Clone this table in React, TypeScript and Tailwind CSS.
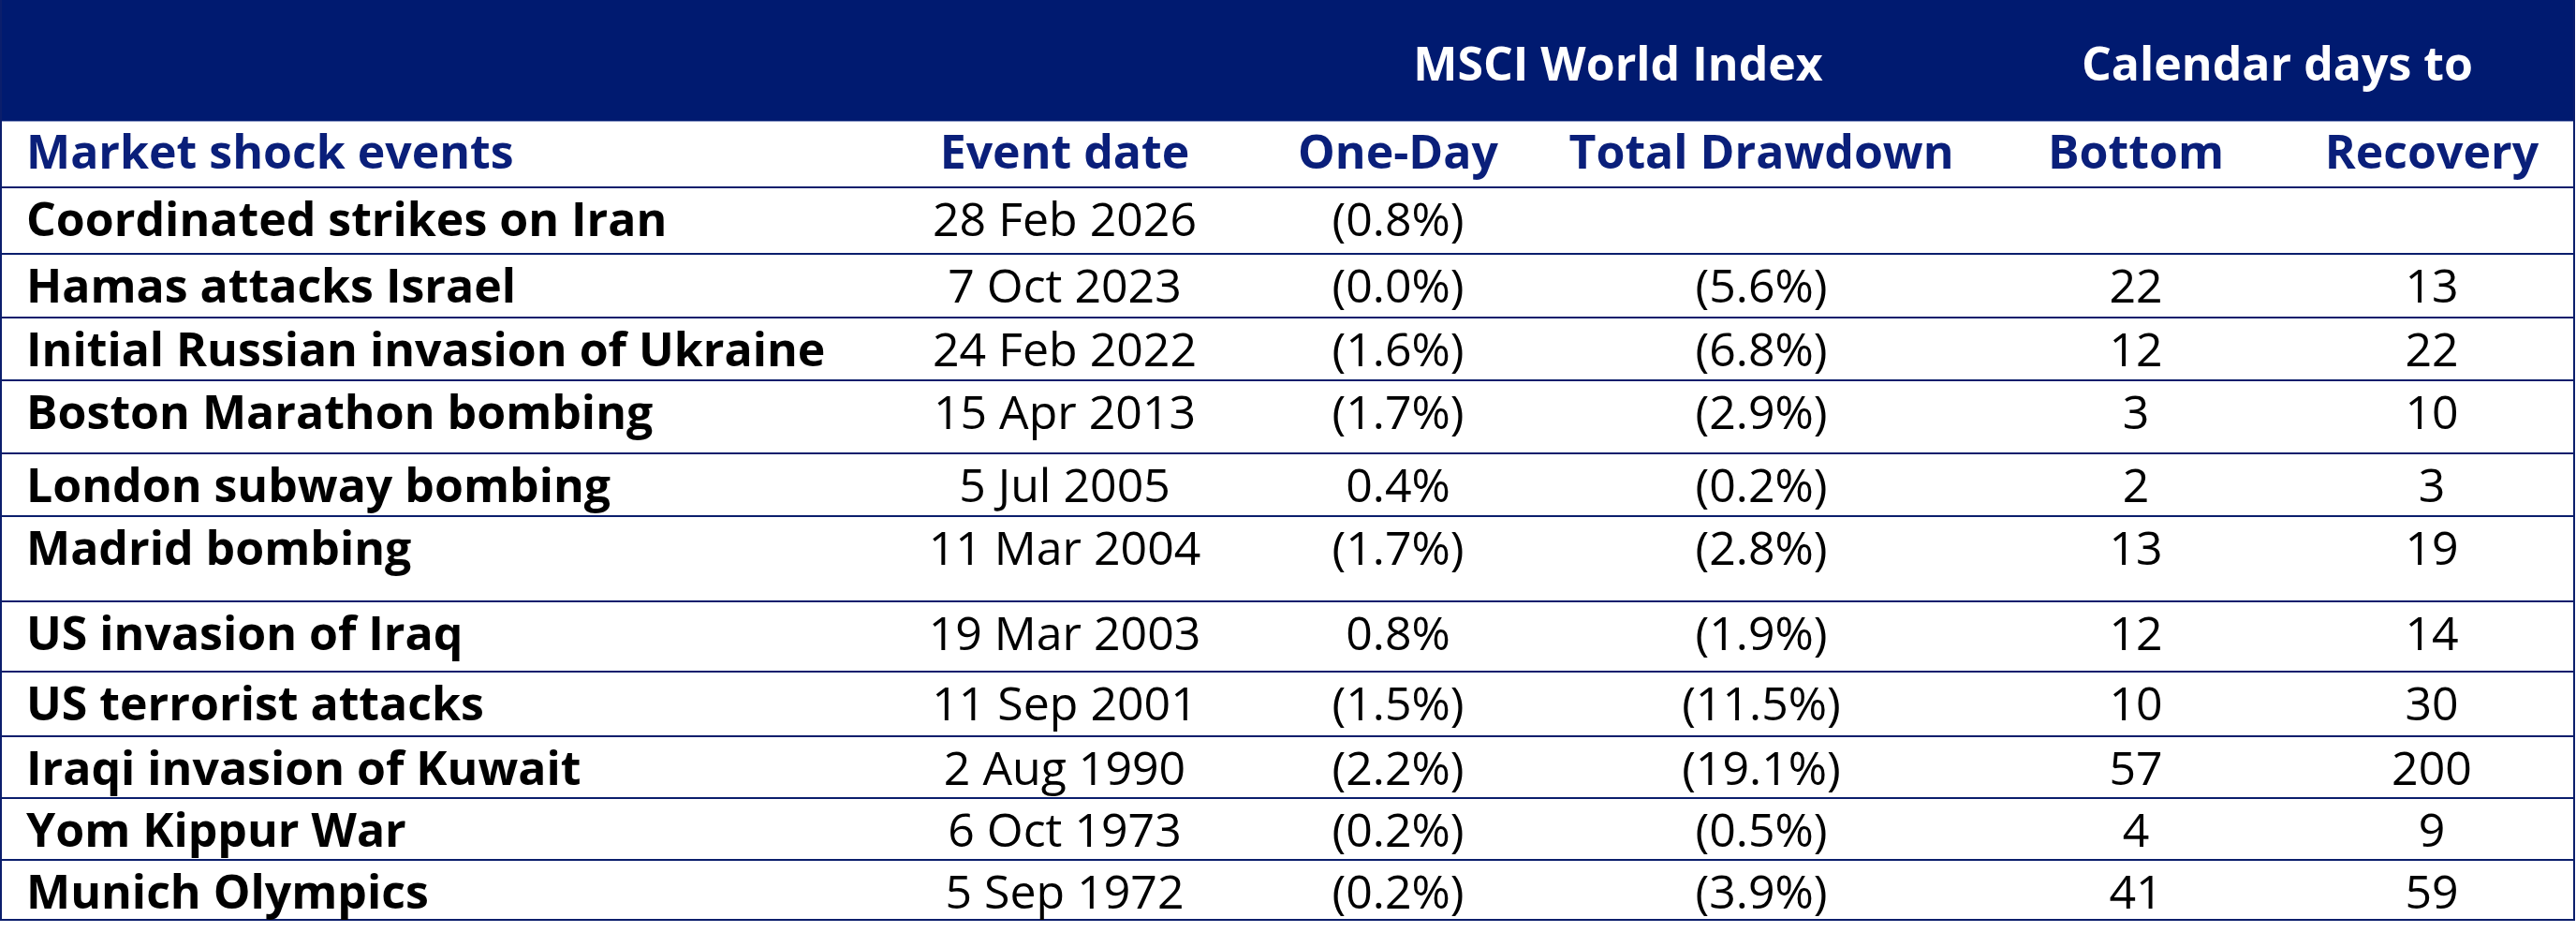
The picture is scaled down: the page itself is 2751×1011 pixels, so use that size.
const cols = "grid grid-cols-[932px_406px_306px_470px_330px_302px]";

type Row = {
  name: string;
  date: string;
  oneDay: string;
  drawdown: string;
  bottom: string;
  recovery: string;
  h: string;
};

const rows: Row[] = [
  { name: "Coordinated strikes on Iran", date: "28 Feb 2026", oneDay: "(0.8%)", drawdown: "", bottom: "", recovery: "", h: "h-[71px]" },
  { name: "Hamas attacks Israel", date: "7 Oct 2023", oneDay: "(0.0%)", drawdown: "(5.6%)", bottom: "22", recovery: "13", h: "h-[68px]" },
  { name: "Initial Russian invasion of Ukraine", date: "24 Feb 2022", oneDay: "(1.6%)", drawdown: "(6.8%)", bottom: "12", recovery: "22", h: "h-[67px]" },
  { name: "Boston Marathon bombing", date: "15 Apr 2013", oneDay: "(1.7%)", drawdown: "(2.9%)", bottom: "3", recovery: "10", h: "h-[78px]" },
  { name: "London subway bombing", date: "5 Jul 2005", oneDay: "0.4%", drawdown: "(0.2%)", bottom: "2", recovery: "3", h: "h-[67px]" },
  { name: "Madrid bombing", date: "11 Mar 2004", oneDay: "(1.7%)", drawdown: "(2.8%)", bottom: "13", recovery: "19", h: "h-[91px]" },
  { name: "US invasion of Iraq", date: "19 Mar 2003", oneDay: "0.8%", drawdown: "(1.9%)", bottom: "12", recovery: "14", h: "h-[75px]" },
  { name: "US terrorist attacks", date: "11 Sep 2001", oneDay: "(1.5%)", drawdown: "(11.5%)", bottom: "10", recovery: "30", h: "h-[69px]" },
  { name: "Iraqi invasion of Kuwait", date: "2 Aug 1990", oneDay: "(2.2%)", drawdown: "(19.1%)", bottom: "57", recovery: "200", h: "h-[66px]" },
  { name: "Yom Kippur War", date: "6 Oct 1973", oneDay: "(0.2%)", drawdown: "(0.5%)", bottom: "4", recovery: "9", h: "h-[66px]" },
  { name: "Munich Olympics", date: "5 Sep 1972", oneDay: "(0.2%)", drawdown: "(3.9%)", bottom: "41", recovery: "59", h: "h-[64px]" },
];

export default function App() {
  return (
    <div className="min-h-screen bg-white font-['Open_Sans',sans-serif] text-[50px] leading-[58px]">
      <div className="w-[2750px] border-x-2 border-[#0b1e6c]">
        {/* dark header */}
        <div className={`${cols} h-[130px] bg-[#001a70] text-white font-bold pt-[38px] border-b border-[#8a96c4]`}>
          <div />
          <div />
          <div className="col-span-2 text-center">MSCI World Index</div>
          <div className="col-span-2 text-center">Calendar days to</div>
        </div>

        {/* sub header */}
        <div className={`${cols} h-[71px] border-b-2 border-[#0b1e6c] text-[#0a1f7a] font-bold pt-[2px]`}>
          <div className="pl-[26px]">Market shock events</div>
          <div className="text-center">Event date</div>
          <div className="text-center">One-Day</div>
          <div className="text-center">Total Drawdown</div>
          <div className="text-center">Bottom</div>
          <div className="text-center">Recovery</div>
        </div>

        {rows.map((r) => (
          <div key={r.name} className={`${cols} ${r.h} border-b-2 border-[#0b1e6c] text-black pt-[3px]`}>
            <div className="pl-[26px] font-bold">{r.name}</div>
            <div className="text-center">{r.date}</div>
            <div className="text-center">{r.oneDay}</div>
            <div className="text-center">{r.drawdown}</div>
            <div className="text-center">{r.bottom}</div>
            <div className="text-center">{r.recovery}</div>
          </div>
        ))}
      </div>
    </div>
  );
}
